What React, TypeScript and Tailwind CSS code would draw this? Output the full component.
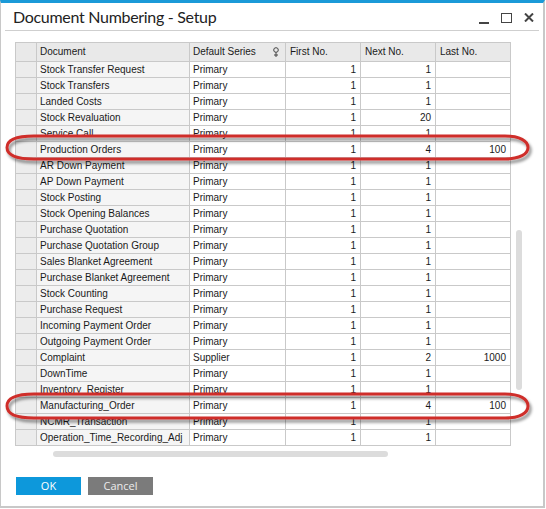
import React from 'react';

type Row = {
    doc: string;
    series: string;
    first: string;
    next: string;
    last?: string;
};

const rows: Row[] = [
    { doc: 'Stock Transfer Request', series: 'Primary', first: '1', next: '1' },
    { doc: 'Stock Transfers', series: 'Primary', first: '1', next: '1' },
    { doc: 'Landed Costs', series: 'Primary', first: '1', next: '1' },
    { doc: 'Stock Revaluation', series: 'Primary', first: '1', next: '20' },
    { doc: 'Service Call', series: 'Primary', first: '1', next: '1' },
    { doc: 'Production Orders', series: 'Primary', first: '1', next: '4', last: '100' },
    { doc: 'AR Down Payment', series: 'Primary', first: '1', next: '1' },
    { doc: 'AP Down Payment', series: 'Primary', first: '1', next: '1' },
    { doc: 'Stock Posting', series: 'Primary', first: '1', next: '1' },
    { doc: 'Stock Opening Balances', series: 'Primary', first: '1', next: '1' },
    { doc: 'Purchase Quotation', series: 'Primary', first: '1', next: '1' },
    { doc: 'Purchase Quotation Group', series: 'Primary', first: '1', next: '1' },
    { doc: 'Sales Blanket Agreement', series: 'Primary', first: '1', next: '1' },
    { doc: 'Purchase Blanket Agreement', series: 'Primary', first: '1', next: '1' },
    { doc: 'Stock Counting', series: 'Primary', first: '1', next: '1' },
    { doc: 'Purchase Request', series: 'Primary', first: '1', next: '1' },
    { doc: 'Incoming Payment Order', series: 'Primary', first: '1', next: '1' },
    { doc: 'Outgoing Payment Order', series: 'Primary', first: '1', next: '1' },
    { doc: 'Complaint', series: 'Supplier', first: '1', next: '2', last: '1000' },
    { doc: 'DownTime', series: 'Primary', first: '1', next: '1' },
    { doc: 'Inventory_Register', series: 'Primary', first: '1', next: '1' },
    { doc: 'Manufacturing_Order', series: 'Primary', first: '1', next: '4', last: '100' },
    { doc: 'NCMR_Transaction', series: 'Primary', first: '1', next: '1' },
    { doc: 'Operation_Time_Recording_Adj', series: 'Primary', first: '1', next: '1' },
];

const cols = 'grid grid-cols-[21px_153px_96px_75px_75px_75px]';
const cell = 'border-r border-b border-[#c9c9c9] px-[3px] leading-[15px] h-[16px] overflow-hidden whitespace-nowrap';
const head = 'h-[19px] border-r border-b border-[#c9c9c9] leading-[18px]';

const PinIcon = () => (
    <svg width="8" height="11" viewBox="0 0 8 11" className="absolute right-[5px] top-[4px]">
        <circle cx="4" cy="3" r="2.3" fill="none" stroke="#444" strokeWidth="1" />
        <path d="M4 5.3 L4 10 M2 8 L6 8" stroke="#444" strokeWidth="1" fill="none" />
    </svg>
);

const Oval = ({ top, bottom }: { top: number; bottom: number }) => {
    const mid = (top + bottom) / 2;
    const d = `M34 ${top} L505 ${top} C520 ${top} 528 ${top + 5} 528 ${mid} C528 ${bottom - 5} 520 ${bottom} 505 ${bottom} L34 ${bottom} C14 ${bottom} 7 ${bottom - 5} 7 ${mid} C7 ${top + 5} 14 ${top} 34 ${top} Z`;
    return <path d={d} fill="none" stroke="#cf2f2c" strokeWidth="3" filter="url(#shadow)" />;
};

export default function App() {
    return (
        <div className="relative h-[509px] w-[546px] bg-white font-['Liberation_Sans',Arial,sans-serif]">
            <div className="flex h-[508px] w-[545px] flex-col border-t-[3px] border-l border-r-2 border-b-2 border-[#c8c8c8] border-t-[#1b9ad8] bg-white">
                {/* title bar */}
                <div className="flex h-[27px] items-center justify-between pl-[12px] pr-[9px]">
                    <span className="font-['Lato',sans-serif] text-[16px] tracking-[-0.3px] leading-none text-[#222]">
                        Document Numbering - Setup
                    </span>
                    <div className="flex items-center gap-[12px] pt-[2px]">
                        <div className="mt-[10px] h-[2px] w-[10px] bg-[#444]" />
                        <div className="h-[10px] w-[11px] border-[1.5px] border-[#444]" />
                        <svg width="10" height="9" viewBox="0 0 10 9">
                            <path d="M1 0.5 L9 8.5 M9 0.5 L1 8.5" stroke="#444" strokeWidth="2" />
                        </svg>
                    </div>
                </div>
                <div className="mx-[4px] h-px bg-[#cfcfcf]" />

                {/* grid + vertical scroll */}
                <div className="mt-[11px] flex">
                    <div className="ml-[14px] flex flex-col">
                        <div className="w-[496px] border-l border-t border-[#c9c9c9] text-[10px] text-[#1a1a1a]">
                            <div className={`${cols} bg-[#e9e9e9]`}>
                                <div className={head} />
                                <div className={`${head} pl-[3px]`}>Document</div>
                                <div className={`${head} relative pl-[3px]`}>
                                    Default Series
                                    <PinIcon />
                                </div>
                                <div className={`${head} pl-[4px]`}>First No.</div>
                                <div className={`${head} pl-[4px]`}>Next No.</div>
                                <div className={`${head} pl-[4px]`}>Last No.</div>
                            </div>
                            {rows.map((r) => (
                                <div key={r.doc} className={cols}>
                                    <div className={`${cell} bg-[#ececec]`} />
                                    <div className={`${cell} bg-[#f5f5f5]`}>{r.doc}</div>
                                    <div className={`${cell} bg-white`}>{r.series}</div>
                                    <div className={`${cell} bg-white pr-[4px] text-right`}>{r.first}</div>
                                    <div className={`${cell} bg-white pr-[4px] text-right`}>{r.next}</div>
                                    <div className={`${cell} bg-white pr-[4px] text-right`}>{r.last ?? ''}</div>
                                </div>
                            ))}
                        </div>
                        <div className="ml-[38px] mt-[5px] h-[6px] w-[335px] rounded-full bg-[#dcdcdc]" />
                    </div>
                    <div className="ml-[5px] mt-[188px] h-[160px] w-[6px] rounded-full bg-[#dcdcdc]" />
                </div>

                {/* buttons */}
                <div className="ml-[15px] mt-[20px] flex gap-[7px] font-['Open_Sans',sans-serif] text-[11px]">
                    <button className="h-[18px] w-[65px] bg-[#0d98db] leading-[18px] text-white">OK</button>
                    <button className="h-[18px] w-[65px] bg-[#7b7b7b] leading-[18px] text-[#ececec]">Cancel</button>
                </div>
            </div>

            <svg className="pointer-events-none absolute left-0 top-0" width="546" height="509">
                <defs>
                    <filter id="shadow" x="-5%" y="-50%" width="110%" height="200%">
                        <feDropShadow dx="2" dy="3" stdDeviation="1.8" floodColor="#000" floodOpacity="0.45" />
                    </filter>
                </defs>
                <Oval top={136} bottom={159} />
                <Oval top={394} bottom={418} />
            </svg>
        </div>
    );
}
